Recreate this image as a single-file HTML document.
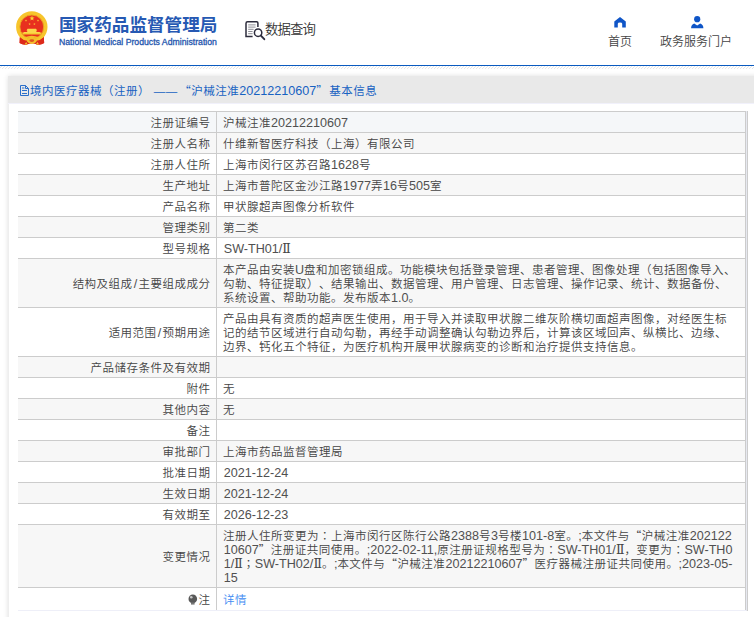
<!DOCTYPE html>
<html lang="zh-CN">
<head>
<meta charset="utf-8">
<title>国家药品监督管理局 数据查询</title>
<style>
html,body{margin:0;padding:0;background:#fff;text-spacing-trim:space-all;}
body{width:754px;height:617px;overflow:hidden;position:relative;font-family:"Liberation Sans","Noto Sans CJK SC",sans-serif;font-size:12px;color:#444;}
.hdr{position:absolute;left:0;top:0;width:754px;height:65px;}
.emblem{position:absolute;left:12px;top:6px;width:40px;height:44px;}
.cn{position:absolute;left:59px;top:11.5px;font-size:17.6px;font-weight:bold;color:#2659b3;white-space:nowrap;line-height:26px;letter-spacing:0;}
.en{position:absolute;left:59px;top:35.5px;font-size:8.7px;color:#2456ae;-webkit-text-stroke:.3px #2456ae;white-space:nowrap;line-height:12px;}
.qt{position:absolute;left:265px;top:19.8px;font-size:13.4px;letter-spacing:-.9px;font-weight:350;color:#333;line-height:20px;white-space:nowrap;}
.nav{position:absolute;top:34px;font-size:12px;font-weight:350;color:#444;line-height:16px;white-space:nowrap;text-align:center;}
.ico{position:absolute;}
.line{position:absolute;left:0;top:65px;width:754px;height:1px;background:#0b5bc0;}
.hatch{position:absolute;left:0;top:66px;width:754px;height:3px;background:repeating-linear-gradient(135deg,#fff 0,#fff 1.4px,#e6e6e6 1.4px,#e6e6e6 2.12px);}
.panel{font-size:11.5px;letter-spacing:.5px;font-weight:350;position:absolute;left:8px;top:76px;width:760px;height:560px;background:#fff;box-shadow:0 0 5px rgba(0,0,0,.13);}
.ptitle{height:28px;box-sizing:border-box;background:#e9e9e9;color:#1762c2;line-height:14px;padding:7px 0 0 22px;white-space:nowrap;position:relative;border-bottom:1px solid #f1f1fb;font-weight:400;}
td span{line-height:0;}
.cq{font-family:"Noto Sans CJK SC",sans-serif;}
.tc{font-family:"Noto Sans CJK TC",sans-serif;}
.dico{position:absolute;left:10px;top:7px;width:12px;height:14px;}
table{position:absolute;left:10px;top:36px;width:728px;border-collapse:collapse;}
td{border-bottom:1px solid #ccc;padding:4px 6px 2px;line-height:14px;vertical-align:middle;}
td.k{width:186.5px;padding-right:5.5px;text-align:right;border-right:1px solid #ccc;white-space:nowrap;}
td.v{border-right:1px solid #ccc;}
tr.g td{background:#f7f7f7;}
tr.last td{border-bottom-color:#eeeff8;}
tr.h td{background:#f5f7f9;}
.n{font-size:12.6px;letter-spacing:0;font-weight:400;}
td .n{color:#505050;}
td .s{margin-left:.8px;}
.r{font-family:"DejaVu Serif",serif;font-size:12.5px;letter-spacing:0;font-weight:400;}
a{color:#3f8cf2;text-decoration:none;}
.bulb{display:inline-block;width:12px;height:14px;vertical-align:-3px;margin-right:-.3px;}
.rb{position:absolute;left:738px;top:35px;width:1px;height:500px;background:#e6e8f0;border-right:1px solid #ccc;}
.lb{position:absolute;left:0;top:28px;width:1px;height:540px;background:#eee;}
.tb{position:absolute;left:10px;top:35px;width:730px;height:1px;background:#ccc;}
</style>
</head>
<body>
<div class="hdr">
<svg class="emblem" viewBox="12 6 40 44">
<path d="M20 37 L23 35 L40.6 35 L43.8 37 L44.2 43 Q41 45.2 37.5 44.6 L32 43.2 L26.5 44.6 Q23 45.2 19.6 43 Z" fill="#dd2a1b"/>
<circle cx="31.8" cy="26.9" r="13.7" fill="none" stroke="#f7c52c" stroke-width="4"/>
<circle cx="31.8" cy="26.9" r="11.9" fill="#e8301f" stroke="#eaa61d" stroke-width=".9"/>
<path d="M22.2 32.6 L41.4 32.6 L40.6 34.5 L23 34.5 Z" fill="#f6c82f"/>
<path d="M24.6 37.2 Q31.8 34.2 39 37.2 L38 38.8 Q31.8 36.4 25.6 38.8 Z" fill="#f3bf2a"/>
<path d="M22.8 33.2 L24.2 31.9 L27.2 31.9 L27.2 30.4 L26.4 30.4 L27.6 28.8 L36 28.8 L37.2 30.4 L36.4 30.4 L36.4 31.9 L39.4 31.9 L40.8 33.2 Z" fill="#fbd84a"/>
<path d="M19.7 37.2 Q23.2 40.4 27.4 40.8 L27.2 44.7 Q23 45.2 19.6 43 Z M43.9 37.2 Q40.4 40.4 36.2 40.8 L36.4 44.7 Q40.6 45.2 44.1 43 Z" fill="#dd2a1b"/>
<ellipse cx="31.8" cy="40.3" rx="4.8" ry="3.6" fill="#f3bf2a"/>
<ellipse cx="31.8" cy="40.6" rx="2.4" ry="1.3" fill="#e0541f"/>
<path d="M24.5 44.6 L26.2 42 L27.6 44.4 Z M39.1 44.6 L37.4 42 L36 44.4 Z" fill="#f3bf2a"/>
<polygon points="32.00,15.60 32.63,17.43 34.57,17.47 33.03,18.63 33.59,20.48 32.00,19.38 30.41,20.48 30.97,18.63 29.43,17.47 31.37,17.43" fill="#fbd435"/>
<polygon points="26.00,19.35 26.29,20.20 27.19,20.21 26.48,20.75 26.73,21.61 26.00,21.10 25.27,21.61 25.52,20.75 24.81,20.21 25.71,20.20" fill="#fbd435"/>
<polygon points="38.00,19.35 38.29,20.20 39.19,20.21 38.48,20.75 38.73,21.61 38.00,21.10 37.27,21.61 37.52,20.75 36.81,20.21 37.71,20.20" fill="#fbd435"/>
<polygon points="29.60,22.85 29.89,23.70 30.79,23.71 30.08,24.25 30.33,25.11 29.60,24.60 28.87,25.11 29.12,24.25 28.41,23.71 29.31,23.70" fill="#fbd435"/>
<polygon points="34.40,22.85 34.69,23.70 35.59,23.71 34.88,24.25 35.13,25.11 34.40,24.60 33.67,25.11 33.92,24.25 33.21,23.71 34.11,23.70" fill="#fbd435"/>
</svg>
<div class="cn">国家药品监督管理局</div>
<div class="en">National Medical Products Administration</div>
<svg class="ico" style="left:240px;top:15px;width:30px;height:30px" viewBox="240 15 30 30">
<path d="M257.9 27 L257.9 23 Q257.9 21.8 256.7 21.8 L247.6 21.8 Q246 21.8 246 23.4 L246 36.5 L252.6 36.5" fill="none" stroke="#2d2c3c" stroke-width="1.5"/>
<path d="M248.2 24.9 H255.6 M248.2 27.1 H255.6 M248.2 29.3 H253.6 M248.2 31.5 H252.6 M248.2 33.7 H252.6" stroke="#8e8e96" stroke-width="1"/>
<circle cx="258.1" cy="32.7" r="3.7" fill="#fff" stroke="#2d2c3c" stroke-width="1.5"/>
<path d="M260.9 35.6 L264.3 39.2" stroke="#2d2c3c" stroke-width="1.9" stroke-linecap="round"/>
</svg>
<svg class="ico" style="left:610px;top:12px;width:20px;height:20px" viewBox="610 12 20 20">
<path d="M620 17 L625.8 21.6 L625.8 27.5 L622.2 27.5 L622.2 23.8 Q622.2 22.6 620 22.6 Q617.8 22.6 617.8 23.8 L617.8 27.5 L614.3 27.5 L614.3 21.6 Z" fill="#0f55c7"/>
</svg>
<svg class="ico" style="left:687px;top:12px;width:20px;height:20px" viewBox="687 12 20 20">
<circle cx="697.2" cy="19.2" r="3.1" fill="#0f55c7"/>
<path d="M691.1 28.3 Q691.1 24.6 694.2 23.6 L697.2 25.6 L700.2 23.6 Q703.4 24.6 703.4 28.3 Z" fill="#0f55c7"/>
</svg>
<div class="qt">数据查询</div>
<div class="nav" style="left:608px;width:24px;">首页</div>
<div class="nav" style="left:660px;width:72px;">政务服务门户</div>
</div>
<div class="line"></div><div class="hatch"></div>
<div class="panel">
<div class="ptitle"><svg class="dico" viewBox="18 83 12 14"><path d="M20.5 85.5 H25.5 L28.5 88.5 V95.5 H20.5 Z M25.5 85.5 V88.5 H28.5" fill="none" stroke="#2a6fca" stroke-width="1"/><path d="M22 88 H24.4 M22 90.5 H27 M22 93.5 H27" stroke="#2a6fca" stroke-width="1"/></svg>境内医疗器械（注册） ——<span class="cq" style="margin-left:1.5px">“</span>沪械注准<span class="n">20212210607</span><span class="cq" style="margin-right:1px">”</span>基本信息</div>
<table>
<tr class="h"><td class="k">注册证编号</td><td class="v">沪械注准<span class="n">20212210607</span></td></tr>
<tr class="g"><td class="k">注册人名称</td><td class="v">什维新智医疗科技（上海）有限公司</td></tr>
<tr><td class="k">注册人住所</td><td class="v">上海市闵行区苏召路<span class="n">1628</span>号</td></tr>
<tr class="g"><td class="k">生产地址</td><td class="v">上海市普陀区金沙江路<span class="n">1977</span>弄<span class="n">16</span>号<span class="n">505</span>室</td></tr>
<tr><td class="k">产品名称</td><td class="v">甲状腺超声图像分析软件</td></tr>
<tr class="g"><td class="k">管理类别</td><td class="v">第二类</td></tr>
<tr><td class="k">型号规格</td><td class="v"><span class="n s">SW-TH01/</span><span class="r">Ⅱ</span></td></tr>
<tr class="g"><td class="k">结构及组成<span class="n" style="margin:0 1.2px">/</span>主要组成成分</td><td class="v">本产品由安装<span class="n">U</span>盘和加密锁组成。功能模块包括登录管理、患者管理、图像处理（包括图像导入、<br>勾勒、特征提取）、结果输出、数据管理、用户管理、日志管理、操作记录、统计、数据备份、<br>系统设置、帮助功能。发布版本<span class="n">1.0</span>。</td></tr>
<tr><td class="k">适用范围<span class="n" style="margin:0 1.2px">/</span>预期用途</td><td class="v">产品由具有资质的超声医生使用，用于导入并读取甲状腺二维灰阶横切面超声图像，对经医生标<br>记的结节区域进行自动勾勒，再经手动调整确认勾勒边界后，计算该区域回声、纵横比、边缘、<br>边界、钙化五个特征，为医疗机构开展甲状腺病变的诊断和治疗提供支持信息。</td></tr>
<tr class="g"><td class="k">产品储存条件及有效期</td><td class="v">&nbsp;</td></tr>
<tr><td class="k">附件</td><td class="v">无</td></tr>
<tr class="g"><td class="k">其他内容</td><td class="v">无</td></tr>
<tr><td class="k">备注</td><td class="v">&nbsp;</td></tr>
<tr class="g"><td class="k">审批部门</td><td class="v">上海市药品监督管理局</td></tr>
<tr><td class="k">批准日期</td><td class="v"><span class="n s">2021-12-24</span></td></tr>
<tr class="g"><td class="k">生效日期</td><td class="v"><span class="n s">2021-12-24</span></td></tr>
<tr><td class="k">有效期至</td><td class="v"><span class="n s">2026-12-23</span></td></tr>
<tr class="g"><td class="k">变更情况</td><td class="v">注册人住所变更为<span class="tc" lang="zh-TW">：</span>上海市闵行区陈行公路<span class="n">2388</span>号<span class="n">3</span>号楼<span class="n">101-8</span>室。<span class="n">;</span>本文件与<span class="cq">“</span>沪械注准<span class="n">202122</span><br><span class="n s">10607</span><span class="cq">”</span>注册证共同使用。<span class="n">;2022-02-11,</span>原注册证规格型号为<span class="tc" lang="zh-TW">：</span><span class="n">SW-TH01/</span><span class="r">Ⅱ</span>，变更为<span class="tc" lang="zh-TW">：</span><span class="n">SW-TH0</span><br><span class="n s">1/</span><span class="r">Ⅱ</span><span class="tc" lang="zh-TW">；</span><span class="n">SW-TH02/</span><span class="r">Ⅱ</span>。<span class="n">;</span>本文件与<span class="cq">“</span>沪械注准<span class="n">20212210607</span><span class="cq">”</span>医疗器械注册证共同使用。<span class="n">;2023-05-</span><br><span class="n s">15</span></td></tr>
<tr class="last"><td class="k"><svg class="bulb" viewBox="186 593 12 14"><circle cx="191.8" cy="598.9" r="4.3" fill="#595959"/><path d="M190 602.5 H193.6 V604.6 H190 Z" fill="#777"/><circle cx="190.3" cy="597.3" r="1.3" fill="#c8c8c8"/></svg>注</td><td class="v" style="padding-top:5px;padding-bottom:3px"><a>详情</a></td></tr>
</table>
<div class="lb"></div><div class="tb"></div><div class="rb"></div>
</div>
</body>
</html>
